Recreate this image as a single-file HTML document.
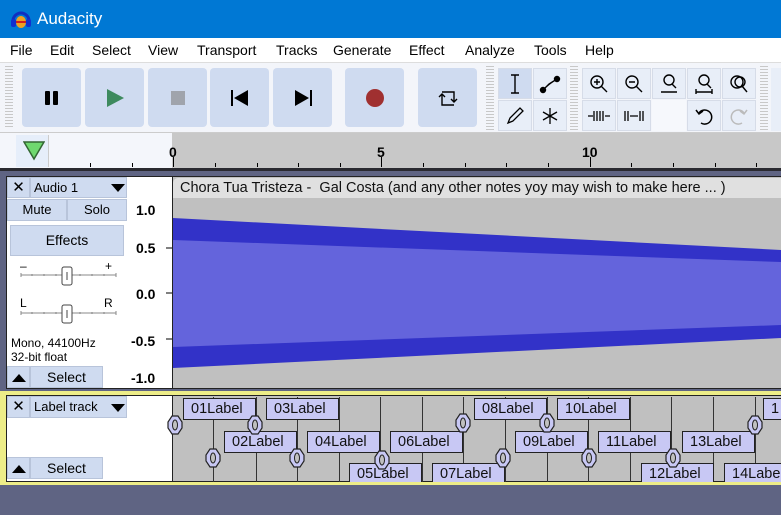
<!DOCTYPE html>
<html><head><meta charset="utf-8"><style>
*{margin:0;padding:0;box-sizing:border-box}
body{width:781px;height:515px;overflow:hidden;background:#5f6483;font-family:"Liberation Sans",sans-serif;position:relative}
.a{position:absolute}
.btn{position:absolute;background:#cfdbf0;border-radius:4px;top:68px;height:59px;width:59px;display:flex;align-items:center;justify-content:center}
.tb{position:absolute;background:#e8eef8;border:1px solid #d6dce8;width:34px;height:31px;display:flex;align-items:center;justify-content:center}
.grip{position:absolute;width:8px;background:repeating-linear-gradient(#c8c8c8 0 1px,transparent 1px 3px)}
.lb{position:absolute;height:22px;background:#c8c8f4;border:1px solid #222;font-size:14.5px;line-height:20px;padding-left:7px;color:#111;width:73px}
.vl{position:absolute;width:1px;background:#333;top:397px;height:85px}
.pb{position:absolute;background:#cfdbf0;border:1px solid #b8c4da;font-size:13px;text-align:center;color:#000}
</style></head><body>
<div class="a" style="left:0;top:0;width:781px;height:38px;background:#0078d4"></div>
<svg class="a" style="left:10px;top:8px" width="22" height="22" viewBox="0 0 22 22"><path d="M3 13 A8 8 0 0 1 19 13" fill="none" stroke="#0f2fc0" stroke-width="3"/><rect x="1" y="11" width="5" height="8" rx="2" fill="#1030d0"/><rect x="16" y="11" width="5" height="8" rx="2" fill="#1030d0"/><ellipse cx="11" cy="14" rx="5" ry="6" fill="#f0a020"/><path d="M6 14 h10" stroke="#d02020" stroke-width="2"/></svg>
<div class="a" style="left:37px;top:9px;color:#fff;font-size:17px">Audacity</div>
<div class="a" style="left:0;top:38px;width:781px;height:25px;background:#fff;border-bottom:1px solid #ddd"></div>
<div class="a" style="top:42px;font-size:14px;color:#000;left:0;width:781px">
<span class="a" style="left:10px">File</span><span class="a" style="left:50px">Edit</span><span class="a" style="left:92px">Select</span><span class="a" style="left:148px">View</span><span class="a" style="left:197px">Transport</span><span class="a" style="left:276px">Tracks</span><span class="a" style="left:333px">Generate</span><span class="a" style="left:409px">Effect</span><span class="a" style="left:465px">Analyze</span><span class="a" style="left:534px">Tools</span><span class="a" style="left:585px">Help</span></div>
<div class="a" style="left:0;top:63px;width:781px;height:70px;background:#f3f5fa;border-bottom:1px solid #ccc"></div>
<div class="grip" style="left:5px;top:66px;height:62px"></div>
<div class="btn" style="left:22px"><svg width="16" height="16"><rect x="1" y="1" width="5" height="14" rx="1"/><rect x="9" y="1" width="5" height="14" rx="1"/></svg></div>
<div class="btn" style="left:85px"><svg width="20" height="20"><path d="M2 1 L19 10 L2 19Z" fill="#3e8a5e"/></svg></div>
<div class="btn" style="left:148px"><svg width="16" height="16"><rect x="1" y="1" width="14" height="14" fill="#a0a4ac"/></svg></div>
<div class="btn" style="left:210px"><svg width="18" height="16"><rect x="0" y="0" width="2" height="16"/><path d="M17 0 L3 8 L17 16Z"/></svg></div>
<div class="btn" style="left:273px"><svg width="18" height="16"><path d="M1 0 L15 8 L1 16Z"/><rect x="16" y="0" width="2" height="16"/></svg></div>
<div class="btn" style="left:345px"><svg width="20" height="20"><circle cx="10" cy="10" r="9" fill="#a03030"/></svg></div>
<div class="btn" style="left:418px"><svg width="20" height="20" fill="none" stroke="#000" stroke-width="1.4"><path d="M4 4 H16 V14"/><path d="M13 11 L16 14 L19 11"/><path d="M16 17 H4 V7"/><path d="M1 9 L4 6 L7 9"/></svg></div>
<div class="grip" style="left:486px;top:66px;height:64px"></div>
<div class="tb" style="left:498px;top:68px;background:#cfdbf0"><svg width="14" height="20" stroke="#000" fill="none" stroke-width="1.4"><path d="M3 1 H11 M7 1 V19 M3 19 H11"/></svg></div>
<div class="tb" style="left:533px;top:68px"><svg width="22" height="20" stroke="#000" stroke-width="1.4"><path d="M4 16 L10 10 L18 5"/><circle cx="4" cy="16" r="2.5"/><circle cx="18" cy="5" r="2.5"/></svg></div>
<div class="tb" style="left:498px;top:100px"><svg width="20" height="20" stroke="#000" fill="none" stroke-width="1.3"><path d="M3 17 L5 12 L15 2 L18 5 L8 15Z M3 17 L8 15"/></svg></div>
<div class="tb" style="left:533px;top:100px"><svg width="20" height="20" stroke="#000" stroke-width="1.3"><path d="M10 2 V18 M3 6 L17 14 M3 14 L17 6"/></svg></div>
<div class="grip" style="left:570px;top:66px;height:64px"></div>
<div class="tb" style="left:582px;top:68px"><svg width="22" height="22" stroke="#000" fill="none" stroke-width="1.4"><circle cx="9" cy="9" r="6"/><path d="M13 13 L19 19 M6 9 H12 M9 6 V12"/></svg></div>
<div class="tb" style="left:617px;top:68px"><svg width="22" height="22" stroke="#000" fill="none" stroke-width="1.4"><circle cx="9" cy="9" r="6"/><path d="M13 13 L19 19 M6 9 H12"/></svg></div>
<div class="tb" style="left:652px;top:68px"><svg width="22" height="22" stroke="#000" fill="none" stroke-width="1.4"><circle cx="11" cy="7" r="5"/><path d="M14 11 L18 15 M3 19 H19"/></svg></div>
<div class="tb" style="left:687px;top:68px"><svg width="22" height="22" stroke="#000" fill="none" stroke-width="1.4"><circle cx="11" cy="7" r="5"/><path d="M14 11 L18 15 M3 19 H19 M3 16 V21 M19 16V21"/></svg></div>
<div class="tb" style="left:722px;top:68px"><svg width="22" height="22" stroke="#000" fill="none" stroke-width="1.4"><circle cx="9" cy="9" r="6"/><circle cx="12" cy="9" r="5"/><path d="M14 13 L19 19"/></svg></div>
<div class="tb" style="left:582px;top:100px"><svg width="24" height="18" stroke="#000" fill="none" stroke-width="1.3"><path d="M1 9 H6 M18 9 H23 M7 4 V14 M10 4 V14 M13 4 V14 M16 4 V14"/></svg></div>
<div class="tb" style="left:617px;top:100px"><svg width="24" height="18" stroke="#000" fill="none" stroke-width="1.3"><path d="M3 4 V14 M6 4 V14 M8 9 H16 M18 4 V14 M21 4 V14"/></svg></div>
<div class="a" style="left:652px;top:100px;width:34px;height:31px;background:#f6f8fc"></div>
<div class="tb" style="left:687px;top:100px"><svg width="22" height="22" stroke="#000" fill="none" stroke-width="1.5"><path d="M6 8 A7 7 0 1 1 8 18"/><path d="M3 5 L6 9 L10 6"/></svg></div>
<div class="tb" style="left:722px;top:100px"><svg width="22" height="22" stroke="#bbb" fill="none" stroke-width="1.5"><path d="M16 8 A7 7 0 1 0 14 18"/><path d="M19 5 L16 9 L12 6"/></svg></div>
<div class="grip" style="left:760px;top:66px;height:64px"></div>
<div class="a" style="left:771px;top:68px;width:10px;height:63px;background:#e8eef8"></div>
<div class="a" style="left:0;top:133px;width:172px;height:35px;background:#f4f6fb"></div>
<div class="a" style="left:16px;top:135px;width:33px;height:32px;background:#e6eefa;border-right:1px solid #ccc"></div>
<svg class="a" style="left:23px;top:141px" width="22" height="20"><path d="M1 1 H21 L11 18Z" fill="#6fd86f" stroke="#336633" stroke-width="1.5"/></svg>
<div class="a" style="left:172px;top:133px;width:609px;height:35px;background:#c8c8c8"></div>
<svg class="a" style="left:0;top:133px" width="781" height="35">
<g stroke="#000" stroke-width="1">
<path d="M90.5 30V34 M132.5 30V34 M173.5 24V34 M215.5 30V34 M257.5 30V34 M298.5 30V34 M340.5 30V34 M381.5 24V34 M423.5 30V34 M465.5 30V34 M506.5 30V34 M548.5 30V34 M590.5 24V34 M631.5 30V34 M673.5 30V34 M715.5 30V34 M756.5 30V34"/></g>
<g font-family="Liberation Sans" font-weight="bold" font-size="14"><text x="169" y="24">0</text><text x="377" y="24">5</text><text x="582" y="24">10</text></g></svg>
<div class="a" style="left:0;top:168px;width:781px;height:3px;background:#2a2a30"></div>
<div class="a" style="left:6px;top:176px;width:122px;height:213px;background:#fff;border:1px solid #222"></div>
<div class="pb" style="left:7px;top:177px;width:23px;height:21px;font-size:15px;line-height:19px">✕</div>
<div class="pb" style="left:30px;top:177px;width:97px;height:21px;text-align:left;padding-left:3px;line-height:19px">Audio 1<svg class="a" style="left:80px;top:6px" width="14" height="8"><path d="M0 0H14L7 8Z"/></svg></div>
<div class="pb" style="left:7px;top:199px;width:60px;height:22px;line-height:20px">Mute</div>
<div class="pb" style="left:67px;top:199px;width:60px;height:22px;line-height:20px">Solo</div>
<div class="pb" style="left:10px;top:225px;width:114px;height:31px;line-height:29px;font-size:14px">Effects</div>
<svg class="a" style="left:18px;top:258px" width="102" height="70" font-family="Liberation Sans" font-size="12">
<text x="2" y="12">–</text><text x="87" y="12">+</text>
<path d="M3 17H98" stroke="#888"/><g stroke="#888"><path d="M3 15V19M14 16V18M26 16V18M38 16V18M62 16V18M74 16V18M86 16V18M98 15V19"/></g>
<rect x="44" y="9" width="10" height="18" rx="2" fill="#fff" stroke="#444"/><path d="M49 14V22" stroke="#444"/>
<text x="2" y="49">L</text><text x="86" y="49">R</text>
<path d="M3 55H98" stroke="#888"/><g stroke="#888"><path d="M3 53V57M14 54V56M26 54V56M38 54V56M62 54V56M74 54V56M86 54V56M98 53V57"/></g>
<rect x="44" y="47" width="10" height="18" rx="2" fill="#fff" stroke="#444"/><path d="M49 52V60" stroke="#444"/>
</svg>
<div class="a" style="left:11px;top:336px;font-size:12px;line-height:14px">Mono, 44100Hz<br>32-bit float</div>
<div class="pb" style="left:7px;top:366px;width:23px;height:22px"><svg style="margin-top:7px" width="14" height="8"><path d="M0 8H14L7 0Z"/></svg></div>
<div class="pb" style="left:30px;top:366px;width:73px;height:22px;line-height:20px;font-size:14px">Select</div>
<div class="a" style="left:127px;top:176px;width:46px;height:213px;background:#fff;border-top:1px solid #222;border-bottom:1px solid #222"></div>
<svg class="a" style="left:127px;top:176px" width="46" height="213" font-family="Liberation Sans" font-weight="bold" font-size="14">
<text x="9" y="39">1.0</text><text x="9" y="77">0.5</text><text x="9" y="123">0.0</text><text x="4" y="170">-0.5</text><text x="4" y="207">-1.0</text>
<path d="M39 72H45 M39 117H45 M39 163H45" stroke="#000"/></svg>
<div class="a" style="left:172px;top:176px;width:609px;height:213px;background:#c0c0c0;border:1px solid #222;border-right:none"></div>
<div class="a" style="left:173px;top:178px;width:608px;height:20px;background:#e0e0e0;border-top-left-radius:5px;font-size:14.5px;padding-left:7px;line-height:20px;color:#111">Chora Tua Tristeza -&nbsp; Gal Costa (and any other notes yoy may wish to make here ... )</div>
<svg class="a" style="left:173px;top:0" width="608" height="400">
<path d="M0 218 L608 250 L608 338 L0 368Z" fill="#3232c8"/>
<path d="M0 240 L608 262 L608 325 L0 347Z" fill="#6464dc"/>
</svg>
<div class="a" style="left:0;top:391px;width:781px;height:94px;background:#eded88"></div>
<div class="a" style="left:6px;top:395px;width:122px;height:87px;background:#fff;border:1px solid #222"></div>
<div class="pb" style="left:7px;top:396px;width:23px;height:22px;font-size:15px;line-height:20px">✕</div>
<div class="pb" style="left:30px;top:396px;width:97px;height:22px;text-align:left;padding-left:3px;line-height:20px">Label track<svg class="a" style="left:80px;top:7px" width="14" height="8"><path d="M0 0H14L7 8Z"/></svg></div>
<div class="pb" style="left:7px;top:457px;width:23px;height:22px"><svg style="margin-top:7px" width="14" height="8"><path d="M0 8H14L7 0Z"/></svg></div>
<div class="pb" style="left:30px;top:457px;width:73px;height:22px;line-height:20px;font-size:14px">Select</div>
<div class="a" style="left:127px;top:395px;width:46px;height:87px;background:#fff;border-top:1px solid #222;border-bottom:1px solid #222"></div>
<div class="a" style="left:172px;top:395px;width:609px;height:87px;background:#c0c0c0;border:1px solid #222;border-right:none;overflow:hidden"></div>
<div class="vl" style="left:213px"></div><div class="vl" style="left:256px"></div><div class="vl" style="left:297px"></div><div class="vl" style="left:339px"></div><div class="vl" style="left:380px"></div><div class="vl" style="left:422px"></div><div class="vl" style="left:463px"></div><div class="vl" style="left:505px"></div><div class="vl" style="left:547px"></div><div class="vl" style="left:588px"></div><div class="vl" style="left:630px"></div><div class="vl" style="left:671px"></div><div class="vl" style="left:713px"></div><div class="vl" style="left:755px"></div>
<div class="a" style="left:172px;top:395px;width:609px;height:87px;overflow:hidden">
<div class="lb" style="left:11px;top:3px">01Label</div>
<div class="lb" style="left:94px;top:3px">03Label</div>
<div class="lb" style="left:302px;top:3px">08Label</div>
<div class="lb" style="left:385px;top:3px">10Label</div>
<div class="lb" style="left:591px;top:3px">1</div>
<div class="lb" style="left:52px;top:36px">02Label</div>
<div class="lb" style="left:135px;top:36px">04Label</div>
<div class="lb" style="left:218px;top:36px">06Label</div>
<div class="lb" style="left:343px;top:36px">09Label</div>
<div class="lb" style="left:426px;top:36px">11Label</div>
<div class="lb" style="left:510px;top:36px">13Label</div>
<div class="lb" style="left:177px;top:68px">05Label</div>
<div class="lb" style="left:260px;top:68px">07Label</div>
<div class="lb" style="left:469px;top:68px">12Label</div>
<div class="lb" style="left:552px;top:68px">14Label</div>
</div>
<svg class="a" style="left:0;top:0" width="781" height="515">
<defs><g id="hd"><path d="M-3 -9 H3 L7 -3 V3 L3 9 H-3 L-7 3 V-3Z" fill="#c8c8f4" stroke="#222" stroke-width="1.2"/><ellipse cx="0" cy="0" rx="2.5" ry="5" fill="#c0c0c0" stroke="#222"/></g></defs>
<use href="#hd" x="175" y="425"/><use href="#hd" x="213" y="458"/><use href="#hd" x="255" y="425"/><use href="#hd" x="297" y="458"/><use href="#hd" x="382" y="460"/><use href="#hd" x="463" y="423"/><use href="#hd" x="503" y="458"/><use href="#hd" x="547" y="423"/><use href="#hd" x="589" y="458"/><use href="#hd" x="673" y="458"/><use href="#hd" x="755" y="425"/>
</svg>
</body></html>
